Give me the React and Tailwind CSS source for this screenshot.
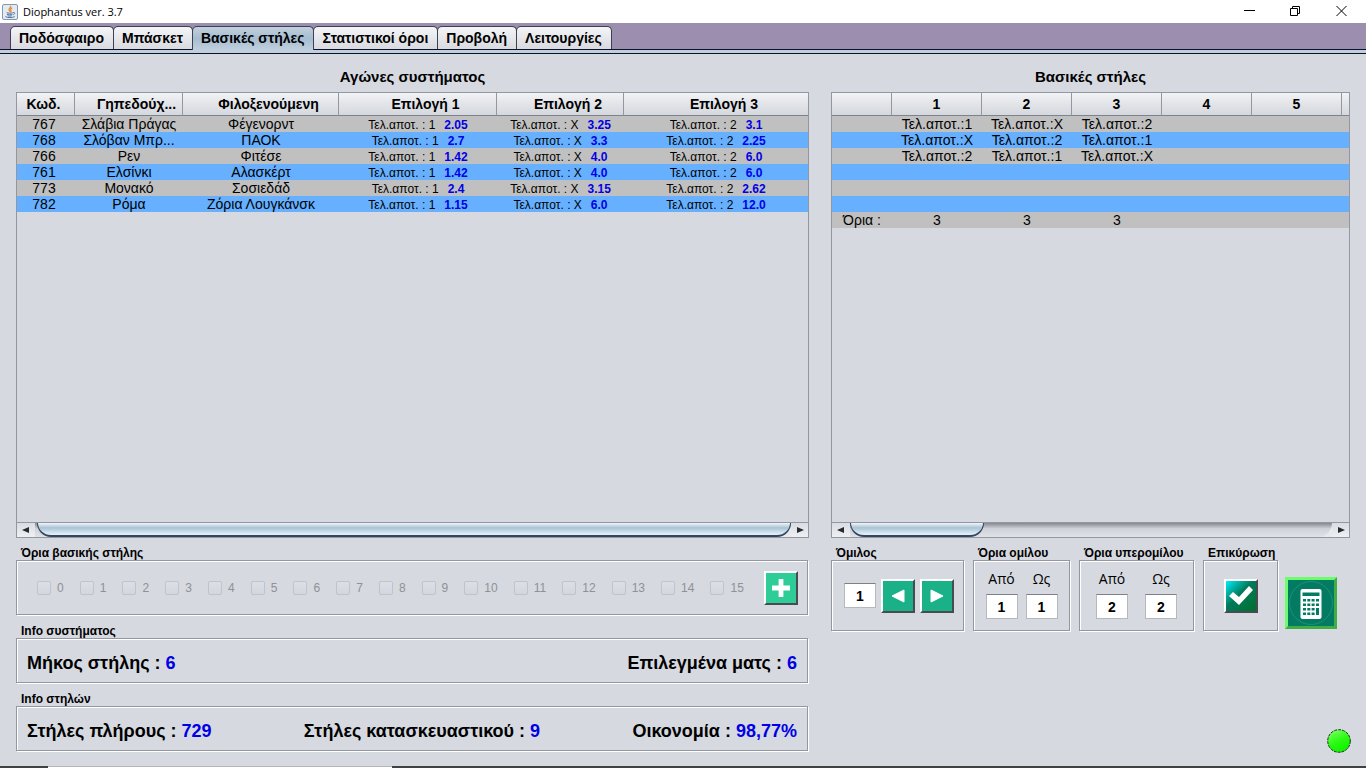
import { useState } from 'react';
import clsx from 'clsx';

const tabs = ['Ποδόσφαιρο', 'Μπάσκετ', 'Βασικές στήλες', 'Στατιστικοί όροι', 'Προβολή', 'Λειτουργίες'];

const matches = [
  { code: '767', home: 'Σλάβια Πράγας', away: 'Φέγενορντ', odds: ['2.05', '3.25', '3.1'] },
  { code: '768', home: 'Σλόβαν Μπρ...', away: 'ΠΑΟΚ', odds: ['2.7', '3.3', '2.25'] },
  { code: '766', home: 'Ρεν', away: 'Φιτέσε', odds: ['1.42', '4.0', '6.0'] },
  { code: '761', home: 'Ελσίνκι', away: 'Αλασκέρτ', odds: ['1.42', '4.0', '6.0'] },
  { code: '773', home: 'Μονακό', away: 'Σοσιεδάδ', odds: ['2.4', '3.15', '2.62'] },
  { code: '782', home: 'Ρόμα', away: 'Ζόρια Λουγκάνσκ', odds: ['1.15', '6.0', '12.0'] },
];

const signs = ['1', 'X', '2'];

const columns = [
  ['', 'Τελ.αποτ.:1', 'Τελ.αποτ.:X', 'Τελ.αποτ.:2', '', '', ''],
  ['', 'Τελ.αποτ.:X', 'Τελ.αποτ.:2', 'Τελ.αποτ.:1', '', '', ''],
  ['', 'Τελ.αποτ.:2', 'Τελ.αποτ.:1', 'Τελ.αποτ.:X', '', '', ''],
  ['', '', '', '', '', '', ''],
  ['', '', '', '', '', '', ''],
  ['', '', '', '', '', '', ''],
  ['Όρια :', '3', '3', '3', '', '', ''],
];

const limits = Array.from({ length: 16 }, (_, i) => i);

const JavaIcon = () => (
  <svg viewBox="0 0 16 16" className="h-4 w-4" fill="none">
    <rect x="0.5" y="0.5" width="15" height="15" rx="1.5" fill="#e3eaf1" stroke="#7f9ab5" />
    <path d="M8.6 1.8c1 1.6-2.6 2.6-1.5 4.4.3.6.8 1 .8 1.6M10.3 3.8c-1.6.8-2.3 1.6-1.4 2.7.5.6.1 1.1-.3 1.5" stroke="#e8822a" strokeWidth="1.2" />
    <path d="M4.6 8.7c1.6.6 4.6.6 6.2 0M5 10.3c1.5.6 4 .6 5.4 0M5.6 11.8c1.2.4 3 .4 4.2 0M3.4 12.6c1.9 1.3 7.3 1.3 9.2 0" stroke="#4f7596" strokeWidth="1" />
    <path d="M11 8.6c2-.6 2.5 1.2.2 2.1" stroke="#4f7596" strokeWidth="0.9" />
  </svg>
);

const TitleBar = () => (
  <header className="flex h-[23px] items-center bg-white pl-0.5 pr-0.5">
    <JavaIcon />
    <h1 className="ml-[5px] font-['Open_Sans','Noto_Sans',sans-serif] text-[11px] leading-4">Diophantus ver. 3.7</h1>
    <div className="ml-auto flex">
      <button aria-label="Minimize" className="flex h-5 w-[46px] items-center justify-center">
        <svg viewBox="0 0 11 11" className="h-[11px] w-[11px]" stroke="#000" fill="none"><path d="M0 4.500h11" /></svg>
      </button>
      <button aria-label="Restore" className="flex h-5 w-[46px] items-center justify-center">
        <svg viewBox="0 0 11 11" className="h-[11px] w-[11px]" stroke="#000" fill="none">
          <path d="M.5 2.5h7v7h-7zM2.5 2.5v-2h7v7h-2" />
        </svg>
      </button>
      <button aria-label="Close" className="flex h-5 w-[46px] items-center justify-center">
        <svg viewBox="0 0 11 11" className="h-[11px] w-[11px]" stroke="#000" fill="none"><path d="M.5 0l10 10M10.5 0l-10 10" /></svg>
      </button>
    </div>
  </header>
);

const Arrow = ({ left }) => (
  <svg viewBox="0 0 8 8" className="h-2 w-2" fill="#26292e">
    {left ? <path d="M7 1v6L0 4z" /> : <path d="M1 1v6l7-3z" />}
  </svg>
);

// Horizontal scroll bar, children is the thumb
const ScrollBar = ({ children }) => (
  <div className="mt-auto flex h-[15px] border-t border-[#9297a1] bg-[#e8eaed]">
    <button aria-label="Κύλιση αριστερά" className="flex w-[18px] items-center justify-center bg-gradient-to-b from-[#d9dce2] to-[#eef0f3]">
      <Arrow left />
    </button>
    <div className="flex flex-1 rounded-br-[14px] bg-gradient-to-b from-[#85888f] via-[#cfd2d8] via-40% to-[#dfe2e7]">{children}</div>
    <button aria-label="Κύλιση δεξιά" className="flex w-[17px] items-center justify-center bg-gradient-to-b from-[#d9dce2] to-[#eef0f3]">
      <Arrow />
    </button>
  </div>
);

const thumb = 'h-full rounded-b-[14px] border-x border-b-2 border-[#34465c] bg-gradient-to-b from-[#f1f6fa] via-[#abc3d5] via-40% to-[#e6f5ff]';
const th = 'h-[23px] border-r border-b border-r-[#9297a1] border-b-[#7d828b] bg-gradient-to-b from-[#f2f3f5] via-[#e2e4e8] via-50% to-[#d5d8de] p-0 text-[14px] leading-4 font-bold last:border-r-0';
const row = 'h-4 odd:bg-[#c0c0c0] even:bg-[#66b0ff]';
const panel = 'border border-[#9297a1] shadow-[1px_1px_0_#fff,inset_1px_1px_0_#fff]';

const Group = ({ title, className, children }) => (
  <fieldset className="min-w-0">
    <legend className="block h-[15px] pl-[5px] text-[12px] leading-[17px] font-bold whitespace-nowrap">{title}</legend>
    <div className={clsx(panel, 'flex items-center', className)}>{children}</div>
  </fieldset>
);

const MatchTable = () => (
  <table className="w-full table-fixed border-separate border-spacing-0 whitespace-nowrap">
    <colgroup>
      <col className="w-[58px]" />
      <col className="w-[108px]" />
      <col className="w-[156px]" />
      <col className="w-[158px]" />
      <col className="w-[127px]" />
      <col className="w-[184px]" />
    </colgroup>
    <thead>
      <tr>
        <th className={clsx(th, 'pr-1')}>Κωδ.</th>
        {['Γηπεδούχ...', 'Φιλοξενούμενη', 'Επιλογή 1', 'Επιλογή 2', 'Επιλογή 3'].map((name) => (
          <th key={name} className={clsx(th, 'pl-4')}>{name}</th>
        ))}
      </tr>
    </thead>
    <tbody className="text-center text-[14px] leading-4">
      {matches.map((m) => (
        <tr key={m.code} className={row}>
          <td className="p-0 pr-1 align-baseline">{m.code}</td>
          <td className="p-0 align-baseline">{m.home}</td>
          <td className="p-0 align-baseline">{m.away}</td>
          {m.odds.map((odd, i) => (
            <td key={i} className="p-0 align-baseline text-[12px] leading-[14px]">
              Τελ.αποτ. : {signs[i]}
              <b className="ml-[9px] text-[#0000e6]">{odd}</b>
            </td>
          ))}
        </tr>
      ))}
    </tbody>
  </table>
);

const ColumnTable = () => (
  <table className="w-full table-fixed border-separate border-spacing-0 whitespace-nowrap">
    <colgroup>
      <col className="w-[60px]" />
      <col className="w-[90px]" />
      <col className="w-[90px]" />
      <col className="w-[90px]" />
      <col className="w-[90px]" />
      <col className="w-[90px]" />
      <col className="w-[7px]" />
    </colgroup>
    <thead>
      <tr>
        {['', '1', '2', '3', '4', '5', ''].map((name, i) => (
          <th key={i} className={th}>{name}</th>
        ))}
      </tr>
    </thead>
    <tbody className="text-center text-[14px] leading-4">
      {columns.map((cells, r) => (
        <tr key={r} className={row}>
          {cells.map((cell, c) => (
            <td key={c} className="p-0">{cell}</td>
          ))}
        </tr>
      ))}
    </tbody>
  </table>
);

const NumberBox = ({ label, value }) => (
  <input
    type="text"
    aria-label={label}
    defaultValue={value}
    className="h-[25px] w-8 border border-[#b4b8bf] border-t-[#7d8088] bg-white p-0 text-center text-[14px] font-bold"
  />
);

const RangeField = ({ label, value }) => (
  <label className="flex w-8 flex-col items-center font-['Open_Sans','Noto_Sans',sans-serif] text-[14px] leading-5">
    <span className="mb-[5px]">{label}</span>
    <span className="flex font-['Liberation_Sans',Arial,sans-serif]"><NumberBox value={value} /></span>
  </label>
);

const raised = 'flex h-[34px] w-[34px] items-center justify-center border-2 border-t-white border-l-white border-r-[#4a4a52] border-b-[#4a4a52]';

const Stat = ({ label, value }) => (
  <p className="text-[18px] leading-6 font-bold whitespace-nowrap">
    {label} : <span className="text-[#0000e6]">{value}</span>
  </p>
);

const App = () => {
  const [active, setActive] = useState(2);

  return (
    <div className="flex min-h-screen flex-col bg-[#d6d9df] font-['Liberation_Sans',Arial,sans-serif] text-black">
      <TitleBar />

      {/* Tabs */}
      <nav className="flex h-[27px] items-end border-b border-[#0d1226] bg-[#9c8eae] pl-[10px]">
        {tabs.map((tab, i) => (
          <button
            key={tab}
            onClick={() => setActive(i)}
            className={clsx(
              '-mr-px rounded-t-[5px] border border-b-0 border-[#3f4150] pr-[9px] pl-2 text-[14px] leading-[22px] font-bold whitespace-nowrap',
              i === active
                ? 'z-10 -mb-px h-6 bg-gradient-to-b from-[#c3d0dd] via-[#a5bdd1] via-50% to-[#c0cfdd] pb-px'
                : 'h-[23px] bg-gradient-to-b from-[#f4f5f7] to-[#d8dae0]'
            )}
          >
            {tab}
          </button>
        ))}
      </nav>
      <div className="h-1 border-b border-[#0d1226] bg-[#c0cfdd]" />

      <main className="flex flex-1 gap-[22px] px-4 pb-[15px]">
        {/* System matches */}
        <section className="flex min-w-0 flex-[793] flex-col">
          <h2 className="pt-[13px] pb-[5px] text-center text-[15px] leading-5 font-bold">Αγώνες συστήματος</h2>
          <div className="flex flex-1 flex-col border border-[#9297a1]">
            <MatchTable />
            <ScrollBar>
              <div className={clsx(thumb, 'ml-0.5 flex-1')} />
            </ScrollBar>
          </div>

          <div className="mt-[7px] mr-px flex flex-col gap-2">
            <Group title="Όρια βασικής στήλης" className="h-[55px] gap-5 pr-[9px] pl-[20px]">
              <div className="flex flex-1 justify-between">
                {limits.map((n) => (
                  <label key={n} className="flex items-center gap-1.5 text-[12px] leading-4 text-[#8e9197]">
                    <input
                      type="checkbox"
                      disabled
                      className="h-[14px] w-[14px] appearance-none rounded-[2px] border border-[#bfc3ca] bg-gradient-to-b from-[#dcdfe5] to-[#d3d7dd]"
                    />
                    {n}
                  </label>
                ))}
              </div>
              <button aria-label="Προσθήκη" className={clsx(raised, 'bg-[#2ecc97]')}>
                <svg viewBox="0 0 18 18" className="h-[18px] w-[18px]" fill="#fff"><path d="M6.600 0h4.800v6.600H18v4.800h-6.600V18H6.600v-6.600H0V6.600h6.600z" /></svg>
              </button>
            </Group>
            <Group title="Info συστήματος" className="h-[45px] justify-between px-[10px] pt-1">
              <Stat label="Μήκος στήλης" value="6" />
              <Stat label="Επιλεγμένα ματς" value="6" />
            </Group>
            <Group title="Info στηλών" className="h-[45px] justify-between px-[10px] pt-1">
              <Stat label="Στήλες πλήρους" value="729" />
              <Stat label="Στήλες κατασκευαστικού" value="9" />
              <Stat label="Οικονομία" value="98,77%" />
            </Group>
          </div>
        </section>

        {/* Base columns */}
        <section className="flex min-w-0 flex-[519] flex-col">
          <h2 className="pt-[13px] pb-[5px] text-center text-[15px] leading-5 font-bold">Βασικές στήλες</h2>
          <div className="flex flex-1 flex-col border border-[#9297a1]">
            <ColumnTable />
            <ScrollBar>
              <div className={clsx(thumb, 'w-[134px]')} />
            </ScrollBar>
          </div>

          <div className="mt-[7px] flex h-[206px] flex-col justify-between">
            <div className="flex gap-[9px]">
              <Group title="Όμιλος" className="h-[71px] w-[133px] justify-center gap-[5px] pl-[3px]">
                <NumberBox label="Όμιλος" value="1" />
                <button aria-label="Προηγούμενος" className={clsx(raised, 'bg-[#1ab188]')}>
                  <svg viewBox="0 0 14 14" className="h-[14px] w-[14px]" fill="#fff"><path d="M13 1v12L1 7z" stroke="#fff" strokeLinejoin="round" /></svg>
                </button>
                <button aria-label="Επόμενος" className={clsx(raised, 'bg-[#1ab188]')}>
                  <svg viewBox="0 0 14 14" className="h-[14px] w-[14px]" fill="#fff"><path d="M1 1v12l12-6z" stroke="#fff" strokeLinejoin="round" /></svg>
                </button>
              </Group>
              <Group title="Όρια ομίλου" className="h-[71px] w-[97px] justify-center gap-2 pb-[3px]">
                <RangeField label="Από" value="1" />
                <RangeField label="Ως" value="1" />
              </Group>
              <Group title="Όρια υπερομίλου" className="h-[71px] w-[115px] justify-center gap-[17px] pb-[3px]">
                <RangeField label="Από" value="2" />
                <RangeField label="Ως" value="2" />
              </Group>
              <Group title="Επικύρωση" className="h-[71px] w-[75px] justify-center">
                <button aria-label="Επικύρωση" className={clsx(raised, 'bg-gradient-to-br from-[#00f0ff] via-[#00795a] via-45% to-[#00702a]')}>
                  <svg viewBox="0 0 26 22" className="h-[22px] w-[26px] shrink-0" fill="#fff"><path d="M1 11l4-4 6 5L21 1l4 4-14 15z" /></svg>
                </button>
              </Group>
              <button
                aria-label="Υπολογισμός"
                className="-ml-0.5 mt-8 flex h-[52px] w-[52px] items-center justify-center border-[3px] border-t-[#6dfc6d] border-r-[#3fae45] border-b-[#3fae45] border-l-[#6dfc6d] bg-[#037b63]"
              >
                <svg viewBox="0 0 46 46" className="h-[46px] w-[46px]">
                  <circle cx="23" cy="23" r="21.5" fill="none" stroke="#2f9580" strokeWidth="0.7" />
                  <rect x="12.500" y="9" width="21" height="30" rx="2" fill="#fff" />
                  <rect x="14.500" y="12.500" width="17" height="3.500" fill="#037b63" />
                  <g fill="#037b63">
                    <path d="M15 19h3v2.500h-3zM19.300 19h3v2.500h-3zM23.600 19h3v2.500h-3zM28 19h3v2.500h-3z" />
                    <path d="M15 23.500h3v2.500h-3zM19.300 23.500h3v2.500h-3zM23.600 23.500h3v2.500h-3zM28 23.500h3v2.500h-3z" />
                    <path d="M15 28h3v2.500h-3zM19.300 28h3v2.500h-3zM23.600 28h3v2.500h-3zM28 28h3v7h-3z" />
                    <path d="M15 32.500h3v2.500h-3zM19.300 32.500h3v2.500h-3zM23.600 32.500h3v2.500h-3z" />
                  </g>
                </svg>
              </button>
            </div>
            <svg viewBox="0 0 24 24" className="-mr-px -mb-0.5 h-6 w-6 self-end">
              <defs>
                <linearGradient id="led" x1="0.2" y1="0" x2="0.7" y2="1">
                  <stop offset="0" stopColor="#7dff6a" />
                  <stop offset="0.5" stopColor="#2bfb12" />
                  <stop offset="1" stopColor="#0cf000" />
                </linearGradient>
              </defs>
              <circle cx="12" cy="12" r="11.300" fill="url(#led)" stroke="#12380f" strokeDasharray="3 1" />
            </svg>
          </div>
        </section>
      </main>

      <footer className="flex h-0.5 bg-[#40423f]">
        <div className="ml-12 w-[344px] border-t border-[#b5b5b5] bg-white" />
      </footer>
    </div>
  );
};

export default App;
